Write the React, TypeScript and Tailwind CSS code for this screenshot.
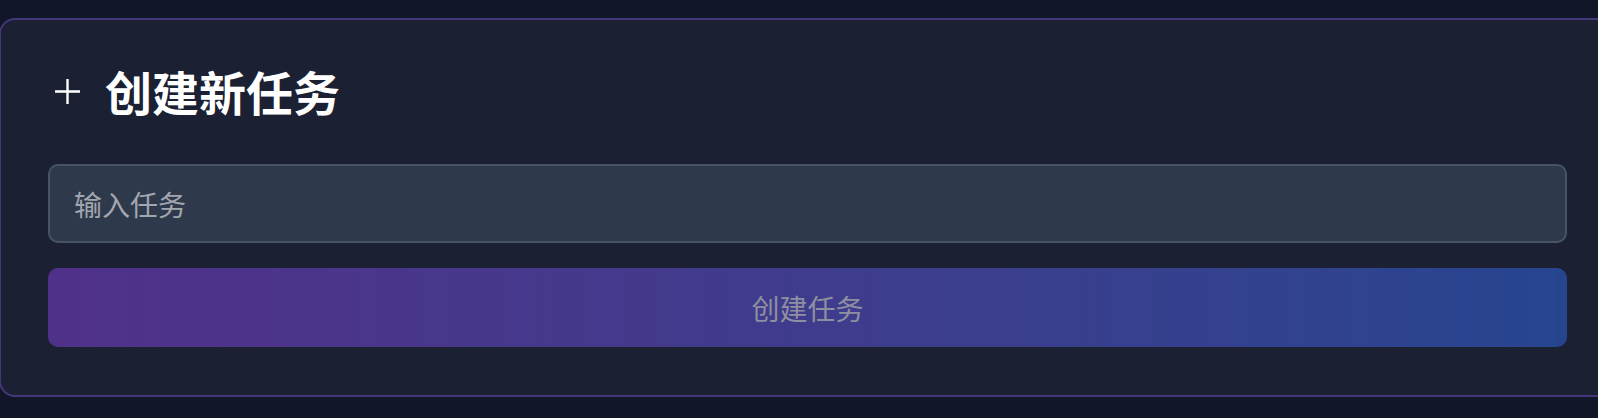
import React from "react";

export default function App() {
  return (
    <div
      className="w-[1598px] h-[418px] overflow-hidden bg-[#111729] pt-[18px]"
      style={{ fontFamily: '"Noto Sans CJK SC", "Noto Sans", sans-serif' }}
    >
      <div className="ml-[-1px] w-[1617px] rounded-2xl border-2 border-[#43367a] bg-[#1b2033] px-[47px] pt-[43px] pb-[48px]">
        <div className="flex items-center h-[56px]">
          <svg width="25" height="25" viewBox="0 0 25 25" className="ml-[7px] mr-[25px] shrink-0">
            <path d="M12.5 0v25M0 12.5h25" stroke="#ffffff" strokeWidth="2.4" />
          </svg>
          <h2 className="text-[47px] leading-[56px] font-bold text-white">创建新任务</h2>
        </div>
        <div className="mt-[45px] flex flex-col gap-[25px]">
          <input
            type="text"
            placeholder="输入任务"
            className="h-[79px] w-full rounded-[10px] border-2 border-[#485366] bg-[#2e3a4c] px-[24px] text-[28px] text-white placeholder:text-[#a3a6ae] outline-none"
          />
          <button
            disabled
            className="h-[79px] w-full rounded-[10px] bg-gradient-to-r from-[#50318a] to-[#27458f] text-[28px] text-[#8e8fa0]"
          >
            创建任务
          </button>
        </div>
      </div>
    </div>
  );
}
